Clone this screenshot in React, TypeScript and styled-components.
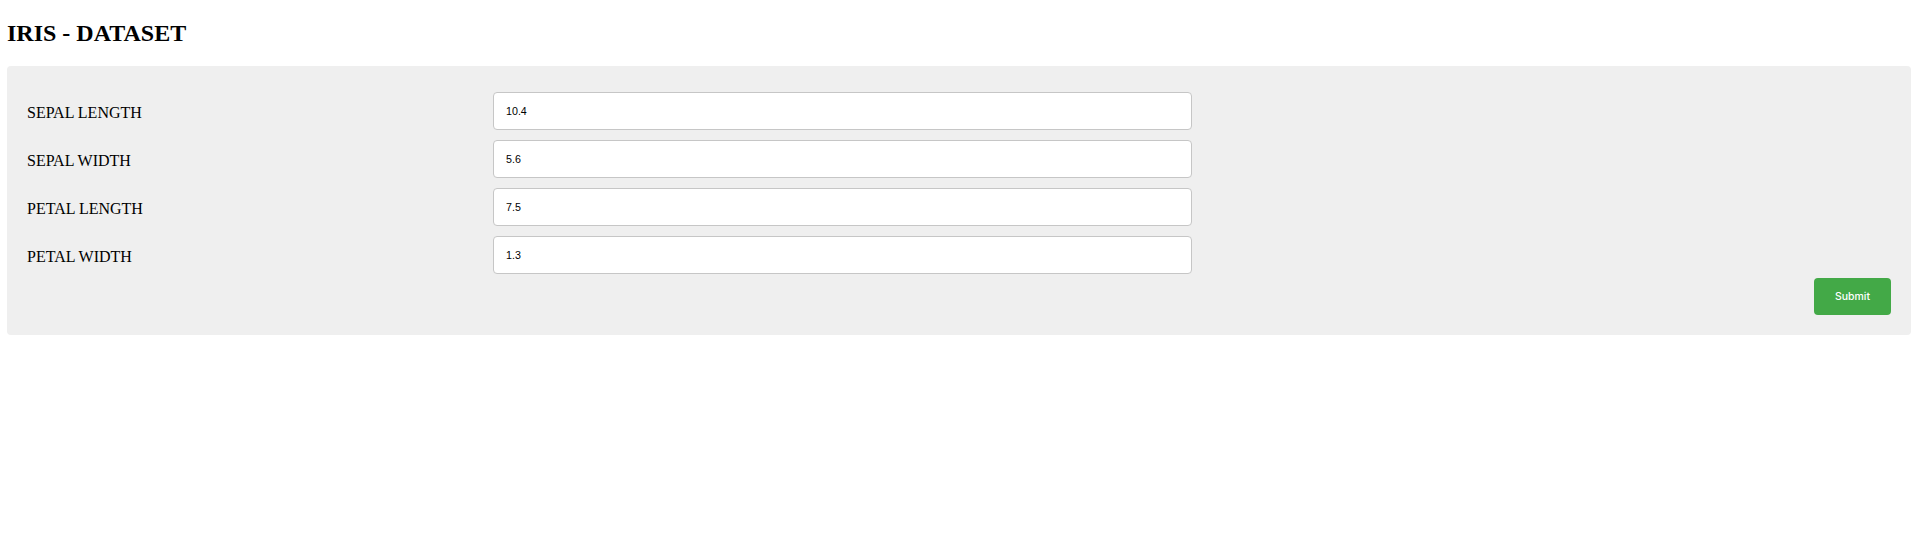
import React from "react";
import styled, { createGlobalStyle } from "styled-components";

const Global = createGlobalStyle`
  html, body { margin: 0; padding: 0; background: #ffffff; }
  body { font-family: "Liberation Serif", "Times New Roman", serif; color: #000; }
`;

const Page = styled.div`
  padding: 20px 8px 0 7px;
`;

const Title = styled.h2`
  margin: 0 0 19px 0;
  font-size: 24px;
  font-weight: bold;
  line-height: normal;
  font-family: "Liberation Serif", serif;
`;

const Panel = styled.form`
  background: #efefef;
  border-radius: 4px;
  padding: 26px 20px 20px 20px;
  display: flex;
  flex-direction: column;
`;

const Fields = styled.div`
  display: flex;
  flex-direction: column;
  gap: 10px;
`;

const Row = styled.div`
  display: grid;
  grid-template-columns: 466px 699px;
  align-items: center;
`;

const Label = styled.label`
  font-size: 16px;
  line-height: normal;
  padding-top: 3px;
  font-family: "Liberation Serif", serif;
`;

const Input = styled.input`
  box-sizing: border-box;
  height: 38px;
  width: 100%;
  border: 1px solid #c6c6c6;
  border-radius: 4px;
  background: #fff;
  padding: 0 12px;
  font-family: "Liberation Sans", Arial, sans-serif;
  font-size: 10.7px;
  color: #000;
  outline: none;
`;

const Actions = styled.div`
  display: flex;
  justify-content: flex-end;
  margin-top: 4px;
`;

const Submit = styled.button`
  width: 77px;
  height: 37px;
  background: #43a947;
  color: #fff;
  border: none;
  border-radius: 4px;
  font-family: Inter, "Liberation Sans", sans-serif;
  font-size: 10.5px;
  font-weight: 500;
  cursor: pointer;
`;

const fields = [
  { label: "SEPAL LENGTH", value: "10.4" },
  { label: "SEPAL WIDTH", value: "5.6" },
  { label: "PETAL LENGTH", value: "7.5" },
  { label: "PETAL WIDTH", value: "1.3" },
];

export default function App() {
  return (
    <>
      <Global />
      <Page>
        <Title>IRIS - DATASET</Title>
        <Panel onSubmit={(e) => e.preventDefault()}>
          <Fields>
            {fields.map((f) => (
              <Row key={f.label}>
                <Label>{f.label}</Label>
                <Input defaultValue={f.value} />
              </Row>
            ))}
          </Fields>
          <Actions>
            <Submit type="submit">Submit</Submit>
          </Actions>
        </Panel>
      </Page>
    </>
  );
}
